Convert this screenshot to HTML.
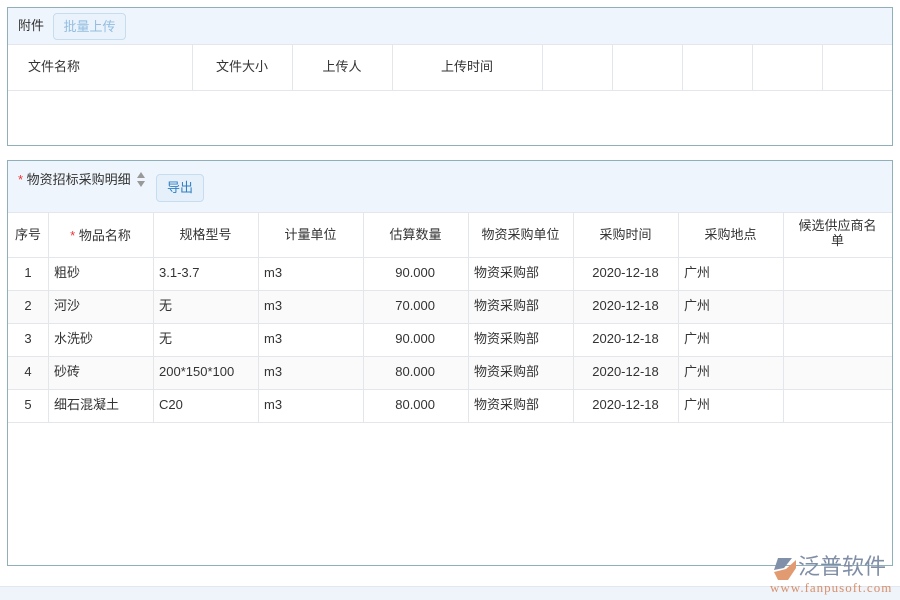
<!DOCTYPE html>
<html><head><meta charset="utf-8"><style>
*{margin:0;padding:0;box-sizing:border-box}
body{width:900px;height:600px;background:#fff;position:relative;overflow:hidden;font-family:"Liberation Sans","Noto Sans CJK SC",sans-serif;font-size:13px;color:#333}
.abs{position:absolute}
.panel{position:absolute;border:1px solid #8fb0b8;background:#fff}
.vl{position:absolute;width:1px;background:#e3e6ea}
.hl{position:absolute;height:1px;background:#e3e6ea;left:0;right:0}
.c{position:absolute;text-align:center;white-space:nowrap}
.btn{position:absolute;border:1px solid #c6dcef;border-radius:4px;background:#e6f0fb;text-align:center}
</style></head><body>

<div class="panel" style="left:7px;top:7px;width:886px;height:139px">
  <div class="abs" style="left:0;top:0;right:0;height:37px;background:#eff5fd;border-bottom:1px solid #e3e6ea"></div>
  <div class="abs" style="left:10px;top:7px">附件</div>
  <div class="btn" style="left:45px;top:5px;width:73px;height:27px;line-height:25px;color:#93bde0;background:#eaf3fc">批量上传</div>
  <div class="hl" style="top:82px"></div>
  <div class="vl" style="left:184px;top:37px;height:45px"></div>
  <div class="vl" style="left:284px;top:37px;height:45px"></div>
  <div class="vl" style="left:384px;top:37px;height:45px"></div>
  <div class="vl" style="left:534px;top:37px;height:45px"></div>
  <div class="vl" style="left:604px;top:37px;height:45px"></div>
  <div class="vl" style="left:674px;top:37px;height:45px"></div>
  <div class="vl" style="left:744px;top:37px;height:45px"></div>
  <div class="vl" style="left:814px;top:37px;height:45px"></div>
  <div class="abs" style="left:20px;top:48px">文件名称</div>
  <div class="c" style="left:184px;width:100px;top:48px">文件大小</div>
  <div class="c" style="left:284px;width:100px;top:48px">上传人</div>
  <div class="c" style="left:384px;width:150px;top:48px">上传时间</div>
</div>

<div class="panel" style="left:7px;top:160px;width:886px;height:406px">
  <div class="abs" style="left:0;top:0;right:0;height:52px;background:#eff5fd;border-bottom:1px solid #e3e6ea"></div>
  <div class="abs" style="left:10px;top:8px"><span style="color:#e33">*</span> 物资招标采购明细</div>
  <div class="abs" style="left:128px;top:9px;width:10px;height:20px">
    <svg width="10" height="20"><path d="M1 8 L5 2 L9 8Z" fill="#999"/><path d="M1 11 L5 17 L9 11Z" fill="#999"/></svg>
  </div>
  <div class="btn" style="left:148px;top:13px;width:48px;height:28px;line-height:26px;color:#2f7fc1">导出</div>
</div>

<div class="abs" style="left:8px;top:213px;width:884px;height:352px">
  <div class="abs" style="left:0;right:0;top:77px;height:33px;background:#fafafa"></div>
  <div class="abs" style="left:0;right:0;top:143px;height:33px;background:#fafafa"></div>
  <div class="hl" style="top:44px"></div>
  <div class="hl" style="top:77px"></div>
  <div class="hl" style="top:110px"></div>
  <div class="hl" style="top:143px"></div>
  <div class="hl" style="top:176px"></div>
  <div class="hl" style="top:209px"></div>
  <div class="vl" style="left:40px;top:0;height:209px"></div>
  <div class="vl" style="left:145px;top:0;height:209px"></div>
  <div class="vl" style="left:250px;top:0;height:209px"></div>
  <div class="vl" style="left:355px;top:0;height:209px"></div>
  <div class="vl" style="left:460px;top:0;height:209px"></div>
  <div class="vl" style="left:565px;top:0;height:209px"></div>
  <div class="vl" style="left:670px;top:0;height:209px"></div>
  <div class="vl" style="left:775px;top:0;height:209px"></div>

  <div class="c" style="left:0;width:40px;top:11px">序号</div>
  <div class="c" style="left:40px;width:105px;top:12px"><span style="color:#e33">*</span> 物品名称</div>
  <div class="c" style="left:145px;width:105px;top:11px">规格型号</div>
  <div class="c" style="left:250px;width:105px;top:11px">计量单位</div>
  <div class="c" style="left:355px;width:105px;top:11px">估算数量</div>
  <div class="c" style="left:460px;width:105px;top:11px">物资采购单位</div>
  <div class="c" style="left:565px;width:105px;top:11px">采购时间</div>
  <div class="c" style="left:670px;width:105px;top:11px">采购地点</div>
  <div class="c" style="left:775px;width:109px;top:5px;white-space:normal;line-height:15px;padding:0 6px">候选供应商名<br>单</div>
</div>

<div class="abs" style="left:8px;top:257px;width:884px">
  <style>.r{position:absolute;left:0;width:884px;height:33px;line-height:31px}.r div{position:absolute;white-space:nowrap}</style>
  <div class="r" style="top:0"><div style="left:0;width:40px;text-align:center">1</div><div style="left:46px">粗砂</div><div style="left:151px">3.1-3.7</div><div style="left:256px">m3</div><div style="left:355px;width:72px;text-align:right">90.000</div><div style="left:466px">物资采购部</div><div style="left:565px;width:105px;text-align:center">2020-12-18</div><div style="left:676px">广州</div></div>
  <div class="r" style="top:33px"><div style="left:0;width:40px;text-align:center">2</div><div style="left:46px">河沙</div><div style="left:151px">无</div><div style="left:256px">m3</div><div style="left:355px;width:72px;text-align:right">70.000</div><div style="left:466px">物资采购部</div><div style="left:565px;width:105px;text-align:center">2020-12-18</div><div style="left:676px">广州</div></div>
  <div class="r" style="top:66px"><div style="left:0;width:40px;text-align:center">3</div><div style="left:46px">水洗砂</div><div style="left:151px">无</div><div style="left:256px">m3</div><div style="left:355px;width:72px;text-align:right">90.000</div><div style="left:466px">物资采购部</div><div style="left:565px;width:105px;text-align:center">2020-12-18</div><div style="left:676px">广州</div></div>
  <div class="r" style="top:99px"><div style="left:0;width:40px;text-align:center">4</div><div style="left:46px">砂砖</div><div style="left:151px">200*150*100</div><div style="left:256px">m3</div><div style="left:355px;width:72px;text-align:right">80.000</div><div style="left:466px">物资采购部</div><div style="left:565px;width:105px;text-align:center">2020-12-18</div><div style="left:676px">广州</div></div>
  <div class="r" style="top:132px"><div style="left:0;width:40px;text-align:center">5</div><div style="left:46px">细石混凝土</div><div style="left:151px">C20</div><div style="left:256px">m3</div><div style="left:355px;width:72px;text-align:right">80.000</div><div style="left:466px">物资采购部</div><div style="left:565px;width:105px;text-align:center">2020-12-18</div><div style="left:676px">广州</div></div>
</div>

<div class="abs" style="left:0;top:586px;width:900px;height:14px;background:#eff4fb;border-top:1px solid #e3e8ef"></div>

<div class="abs" style="left:770px;top:556px;width:30px;height:26px">
  <svg width="30" height="26"><path d="M8 2 L22 2 L14 12 L4 14Z" fill="#8090a8"/><path d="M4 16 L16 13 L26 4 L26 12 L18 24 L8 24Z" fill="#e29a70"/></svg>
</div>
<div class="abs" style="left:798px;top:553px;font-size:22px;color:#7f8ea6;line-height:28px;width:94px;white-space:nowrap">泛普软件</div>
<div class="abs" style="left:770px;top:580px;font-size:13px;color:#d9906a;font-family:'Liberation Serif',serif;letter-spacing:1px;white-space:nowrap">www.fanpusoft.com</div>

</body></html>
